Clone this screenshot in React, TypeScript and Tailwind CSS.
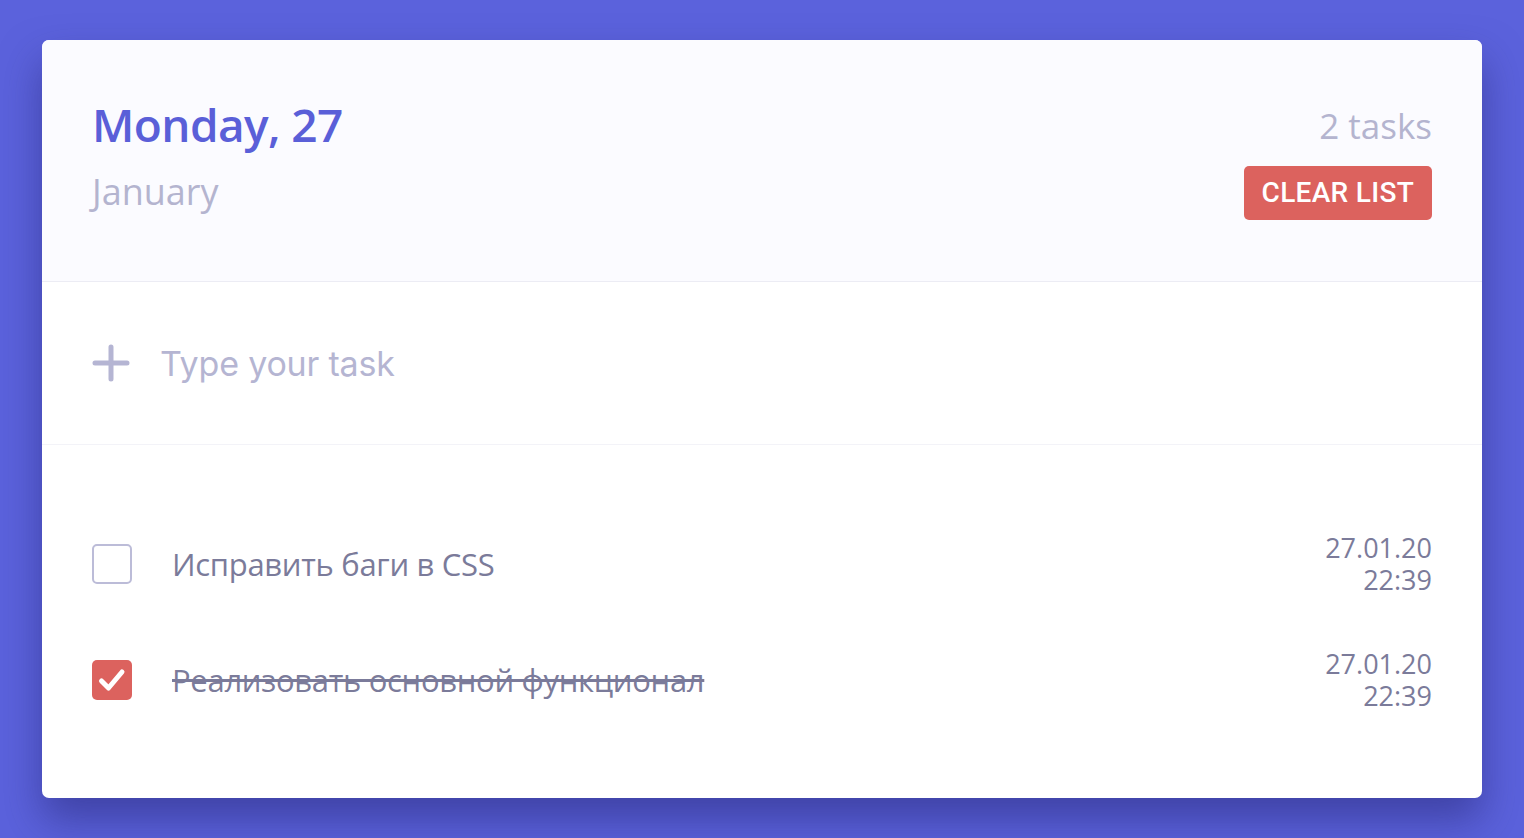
import React, { useState } from 'react';

interface Task {
  id: number;
  title: string;
  done: boolean;
  date: string;
  time: string;
}

const initialTasks: Task[] = [
  { id: 1, title: 'Исправить баги в CSS', done: false, date: '27.01.20', time: '22:39' },
  { id: 2, title: 'Реализовать основной функционал', done: true, date: '27.01.20', time: '22:39' },
];

const PlusIcon = () => (
  <svg width="38" height="38" viewBox="0 0 38 38" fill="none">
    <path d="M19 3v32M3 19h32" stroke="#b5b5d3" strokeWidth="5" strokeLinecap="round" />
  </svg>
);

const Checkbox = ({ checked, onClick }: { checked: boolean; onClick: () => void }) => (
  <button
    onClick={onClick}
    className={`w-10 h-10 shrink-0 rounded-[5px] flex items-center justify-center ${checked ? 'bg-[#dc625e]' : 'border-2 border-[#bcbcd8] bg-white'}`}
  >
    {checked && (
      <svg width="40" height="40" viewBox="0 0 40 40" fill="none">
        <path d="M9.5 21l7 7L30 12" stroke="white" strokeWidth="5" strokeLinecap="round" strokeLinejoin="round" />
      </svg>
    )}
  </button>
);

export default function App() {
  const [tasks, setTasks] = useState<Task[]>(initialTasks);
  const [text, setText] = useState('');

  const toggle = (id: number) =>
    setTasks(ts => ts.map(t => (t.id === id ? { ...t, done: !t.done } : t)));

  return (
    <div className="min-h-[838px] bg-[#5b62dc] pt-10 pb-10 px-[42px] font-['Open_Sans',sans-serif]">
      <div className="bg-white rounded-[7px] overflow-hidden shadow-[0_22px_40px_rgba(40,40,120,0.55)]">
        <div className="bg-[#fbfbff] h-[242px] px-[50px] flex items-start justify-between border-b border-[#ececf4]">
          <div className="flex flex-col pt-[56px]">
            <h1 className="text-[46px] leading-[56px] font-semibold text-[#5a5fd8] tracking-[-0.6px]">Monday, 27</h1>
            <div className="text-[36px] leading-[50px] mt-[15px] text-[#b4b4cf]">January</div>
          </div>
          <div className="flex flex-col items-end pt-[64px]">
            <div className="text-[35px] leading-[44px] text-[#b4b4cf]">{tasks.length} tasks</div>
            <button
              onClick={() => setTasks([])}
              className="mt-[18px] h-[54px] px-[18px] rounded-[5px] bg-[#dc625e] text-white text-[28px] font-medium font-['Roboto',sans-serif] tracking-[0.3px]"
            >
              CLEAR LIST
            </button>
          </div>
        </div>

        <div className="h-[163px] px-[50px] flex items-center gap-[30px] border-b border-[#f3f3f8]">
          <PlusIcon />
          <input
            value={text}
            onChange={e => setText(e.target.value)}
            placeholder="Type your task"
            className="flex-1 bg-transparent outline-none text-[34px] text-[#7a7a99] placeholder:text-[#b5b5d2] font-['Inter',sans-serif] tracking-[-0.2px]"
          />
        </div>

        <div className="px-[50px] pt-[87px] pb-[86px] flex flex-col gap-[52px]">
          {tasks.map(task => (
            <div key={task.id} className="flex items-center justify-between h-16">
              <div className="flex items-center gap-10">
                <Checkbox checked={task.done} onClick={() => toggle(task.id)} />
                <span className={`text-[31px] text-[#7b7b9a] tracking-[-0.3px] ${task.done ? 'line-through' : ''}`}>
                  {task.title}
                </span>
              </div>
              <div className="text-right text-[27px] leading-8 text-[#7b7b9a]">
                <div>{task.date}</div>
                <div>{task.time}</div>
              </div>
            </div>
          ))}
        </div>
      </div>
    </div>
  );
}
